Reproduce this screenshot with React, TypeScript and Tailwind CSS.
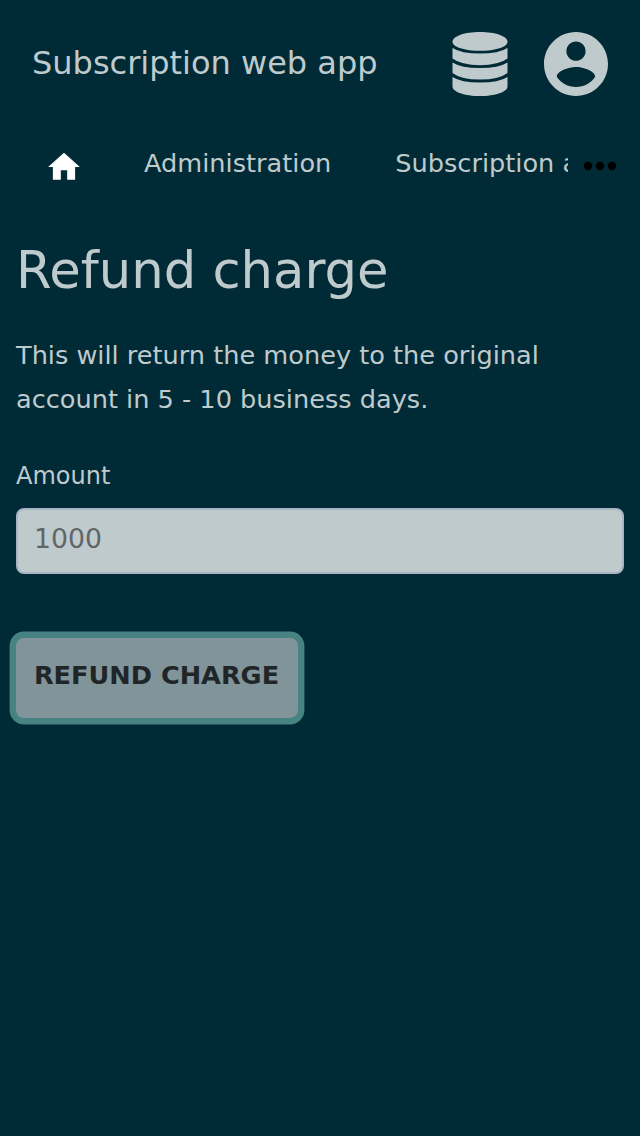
function DatabaseIcon() {
  return (
    <svg viewBox="0 0 56 64" className="h-16 w-14" fill="currentColor">
      <path d="M28 0C43 0 55.5 4 55.5 9.7C55.5 15 43 18.8 28 18.8S.5 15 .5 9.7C.5 4 13 0 28 0z" />
      <path d="M.5 16Q9 21.5 28 21.5T55.5 16V26.6Q47 33.2 28 33.2T.5 26.6z" />
      <path d="M.5 30.5Q9 36.1 28 36.1T55.5 30.5V41Q47 47.6 28 47.6T.5 41z" />
      <path d="M.5 44.9Q9 50.5 28 50.5T55.5 44.9V54.4C55.5 59.8 43 64 28 64S.5 59.8.5 54.4z" />
    </svg>
  );
}

function AccountIcon() {
  return (
    <svg viewBox="2 2 20 20" className="h-16 w-16" fill="currentColor">
      <path d="M12 2C6.48 2 2 6.48 2 12s4.48 10 10 10 10-4.48 10-10S17.52 2 12 2zm0 3c1.66 0 3 1.34 3 3s-1.34 3-3 3-3-1.34-3-3 1.34-3 3-3zm0 14.2c-2.5 0-4.71-1.28-6-3.22.03-1.99 4-3.08 6-3.08 1.99 0 5.97 1.09 6 3.08-1.29 1.94-3.5 3.22-6 3.22z" />
    </svg>
  );
}

function Header() {
  return (
    <header className="flex h-32 items-center justify-between px-8">
      <h1 className="pb-0.5 text-[32px] leading-[48px]">Subscription web app</h1>
      <div className="flex items-center gap-9">
        <DatabaseIcon />
        <AccountIcon />
      </div>
    </header>
  );
}

function Nav() {
  return (
    <nav className="flex h-[72px] items-center">
      <div className="flex w-[568px] items-center overflow-hidden text-[25.6px] leading-[44px] whitespace-nowrap">
        <a className="mt-1 ml-12 shrink-0 text-white">
          <svg viewBox="2 3.2 20 17" className="h-[27px] w-8 overflow-visible" fill="currentColor">
            <path d="M10 20v-6h4v6h5v-8h3L12 3 2 12h3v8z" />
          </svg>
        </a>
        <a className="ml-16 pb-0.5">Administration</a>
        <a className="ml-16 pb-0.5">Subscription administration</a>
      </div>
      <svg viewBox="0 0 32 8" className="mt-1 ml-4 h-2 w-8 overflow-visible" fill="#000">
        <circle cx="4" cy="4" r="4.2" />
        <circle cx="16" cy="4" r="4.2" />
        <circle cx="28" cy="4" r="4.2" />
      </svg>
    </nav>
  );
}

export default function App() {
  return (
    <div className="min-h-[1136px] w-[640px] overflow-hidden bg-[#002b36] font-['DejaVu_Sans',sans-serif] text-[#bfcacd]">
      <Header />
      <Nav />
      <main className="px-4 pt-[34px]">
        <h2 className="text-[51.2px] leading-[72px]">Refund charge</h2>
        <p className="mt-[27px] text-[25.6px] leading-[44px]">
          This will return the money to the original account in 5 - 10 business days.
        </p>
        <label className="mt-[33px] block text-[24px] leading-[44px]">Amount</label>
        <input
          placeholder="1000"
          className="mt-[10px] block h-[66px] w-full rounded-lg border-2 border-[#a6b4c4] bg-[#bfcacd] px-4 pb-1.5 text-[26.7px] text-[#5e6668] placeholder:text-[#5e6668]"
        />
        <button className="mt-16 block h-20 w-[282px] rounded-lg bg-[#80949a] pr-px pb-1.5 text-[25.6px] font-bold whitespace-nowrap text-[#202628] ring-[6.4px] ring-[#478382]">
          REFUND CHARGE
        </button>
      </main>
    </div>
  );
}
